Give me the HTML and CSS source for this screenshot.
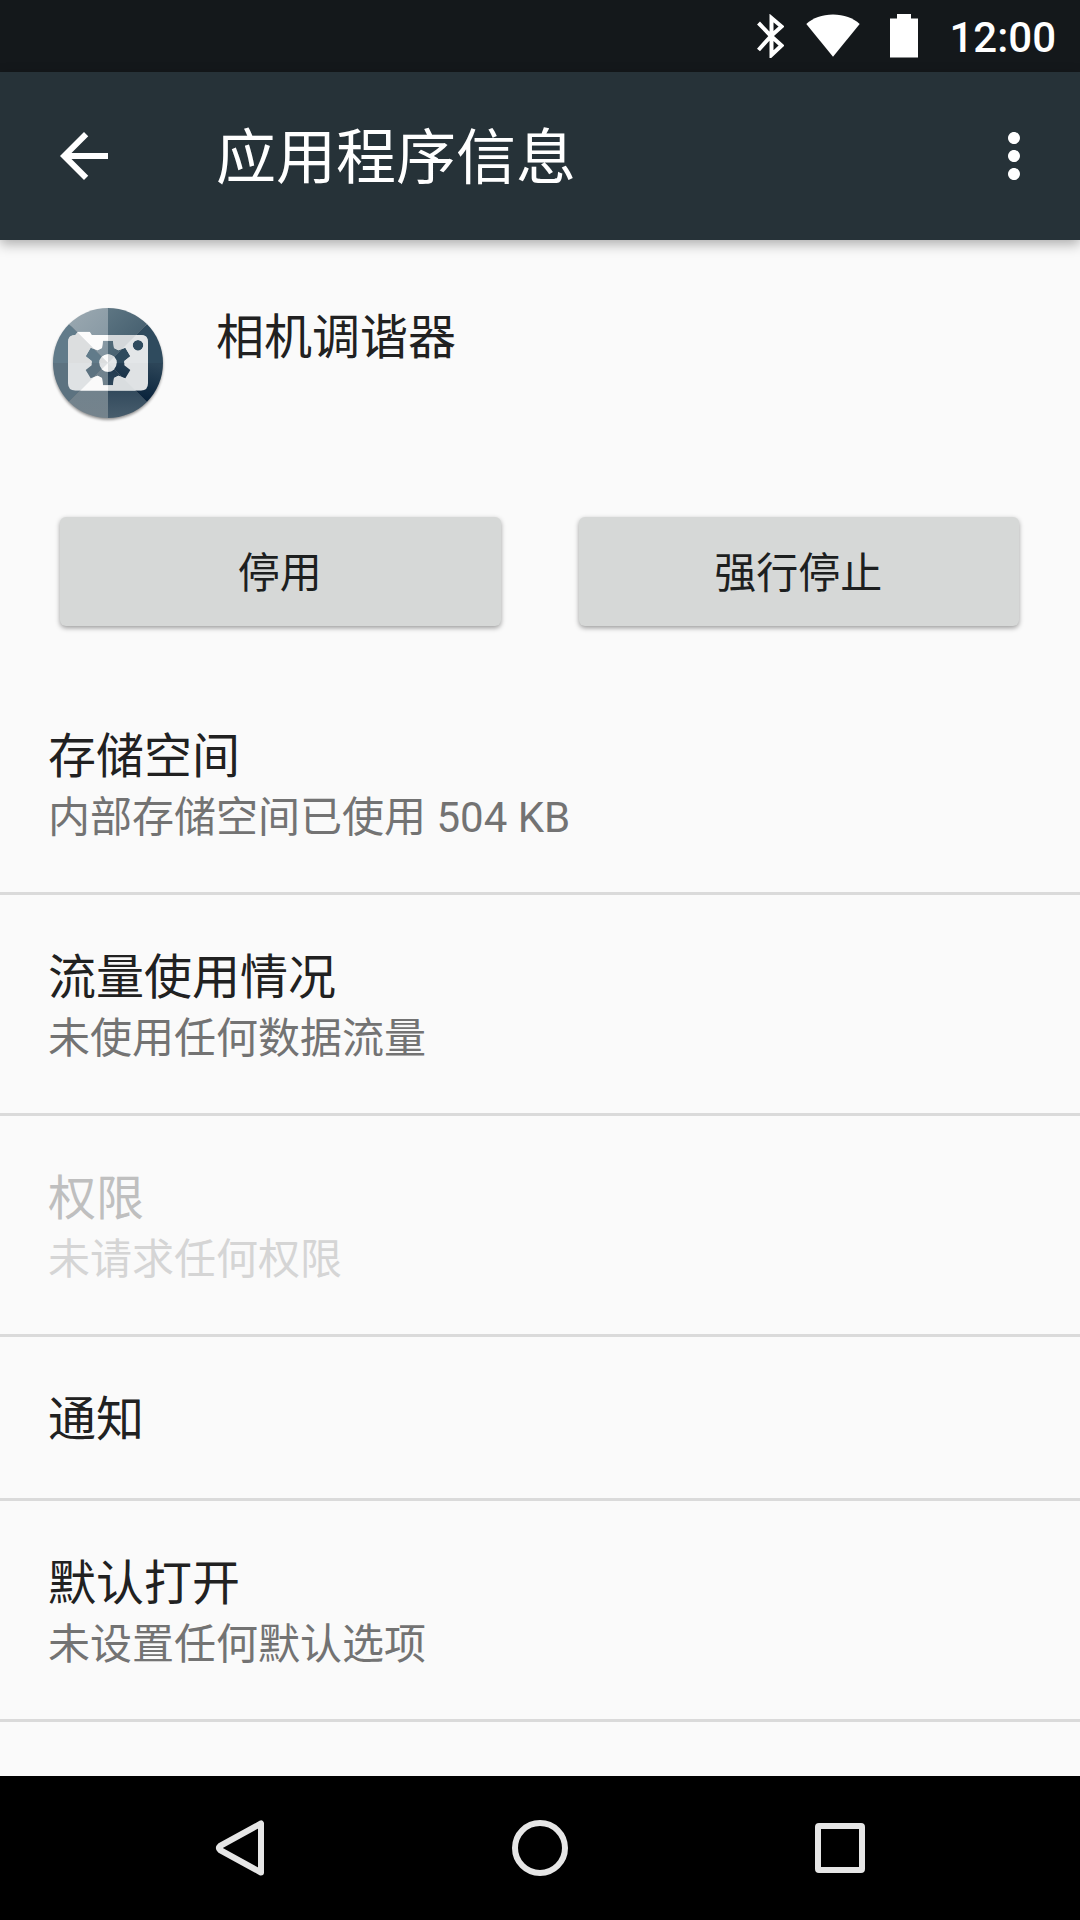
FILE: index.html
```html
<!DOCTYPE html>
<html lang="zh-CN">
<head>
<meta charset="utf-8">
<title>应用程序信息</title>
<link rel="stylesheet" href="styles.css">
</head>
<body>
<div class="screen">
  <div class="status-bar">
    <svg class="bluetooth" width="27" height="44" viewBox="0 0 27 44"><path d="M1.500 9L14 22L1.500 36M14 22L24.500 12.500L14.500 4V41L24.500 31.500L14 22" fill="none" stroke="#fff" stroke-width="4"/></svg>
    <svg class="wifi" width="54" height="44" viewBox="0 0 54 44"><path d="M0.300 10C7 4 16 0.500 27 0.500S47 4 53.700 10L27 42.800Z" fill="#fff"/></svg>
    <svg class="battery" width="28" height="44" viewBox="0 0 28 44"><path d="M7 0H21V4.500H28V43.500H0V4.500H7Z" fill="#fff"/></svg>
    <span class="clock">12:00</span>
  </div>
  <header class="toolbar">
    <svg width="72" height="72" viewBox="0 0 24 24"><path d="M20 11H7.830l5.590-5.590L12 4l-8 8 8 8 1.410-1.410L7.830 13H20v-2z" fill="#fff"/></svg>
    <h1 class="title">应用程序信息</h1>
    <svg width="72" height="72" viewBox="0 0 24 24"><path d="M12 8c1.100 0 2-.9 2-2s-.9-2-2-2-2 .9-2 2 .9 2 2 2zm0 2c-1.100 0-2 .9-2 2s.9 2 2 2 2-.9 2-2-.9-2-2-2zm0 6c-1.100 0-2 .9-2 2s.9 2 2 2 2-.9 2-2-.9-2-2-2z" fill="#fff"/></svg>
  </header>
  <main class="content">
    <section class="app">
      <svg class="app-icon" width="140" height="140" viewBox="0 0 420 420">
        <defs>
          <clipPath id="disc"><circle cx="204" cy="219" r="165"/></clipPath>
          <filter id="shadow" x="-20%" y="-20%" width="140%" height="140%"><feGaussianBlur stdDeviation="5"/></filter>
          <linearGradient id="n1" x1="0" y1="0" x2="1" y2="1"><stop offset="0" stop-color="#a3afb6"/><stop offset="1" stop-color="#80939f"/></linearGradient>
          <linearGradient id="n2" x1="0" y1="0" x2="1" y2="1"><stop offset="0" stop-color="#5f7784"/><stop offset="1" stop-color="#344f61"/></linearGradient>
          <linearGradient id="e2" x1="0.700" y1="0" x2="0.500" y2="0.750"><stop offset="0" stop-color="#2c4558"/><stop offset="1" stop-color="#001a34"/></linearGradient>
          <linearGradient id="s1" x1="0" y1="0" x2="0" y2="1"><stop offset="0" stop-color="#6f828e"/><stop offset="1" stop-color="#75838c"/></linearGradient>
          <linearGradient id="s2" x1="0" y1="0" x2="0" y2="1"><stop offset="0" stop-color="#1c364c"/><stop offset="1" stop-color="#4c6170"/></linearGradient>
          <clipPath id="camera"><path clip-rule="evenodd" d="M106 135L114 125H149L155 135H303Q324 135 324 157V280Q324 302 303 302H106Q84 302 84 280V157Q84 135 106 135ZM294 150A16 16 0 1 0 294 182A16 16 0 1 0 294 150ZM189 152H219L222 174L235 181L256 173L271 199L253 213V226L271 240L256 265L235 257L222 264L219 286H189L186 264L173 257L152 265L137 240L155 226V213L137 199L152 173L173 181L186 174ZM204 193A26 26 0 1 0 204 245A26 26 0 1 0 204 193Z"/></clipPath>
        </defs>
        <circle cx="204" cy="225" r="164" fill="#000" opacity=".45" filter="url(#shadow)"/>
        <g clip-path="url(#disc)">
          <path d="M204 219V39H24Z" fill="url(#n1)"/>
          <path d="M204 219L24 39V219Z" fill="#617b8a"/>
          <path d="M204 219H24V399Z" fill="#5c7280"/>
          <path d="M204 219L24 399H204Z" fill="url(#s1)"/>
          <path d="M204 219V399H384Z" fill="url(#s2)"/>
          <path d="M204 219L384 399V219Z" fill="url(#e2)"/>
          <path d="M204 219H384V39Z" fill="#2f4b5e"/>
          <path d="M204 219L384 39H204Z" fill="url(#n2)"/>
        </g>
        <g clip-path="url(#camera)">
          <rect x="80" y="120" width="250" height="190" fill="#dfe2e4"/>
          <path d="M204 219V109H94Z" fill="#fcfcfc"/>
          <path d="M204 219L84 99V219Z" fill="#dcdedf"/>
          <path d="M204 219L104 319H204Z" fill="#fafafa"/>
          <path d="M204 219V319H304Z" fill="#d9dddf"/>
          <path d="M204 219H334V89Z" fill="#e3e6e8"/>
          <path d="M204 219L314 109H204Z" fill="#d3d7da"/>
        </g>
      </svg>
      <h2 class="app-name">相机调谐器</h2>
    </section>
    <div class="actions">
      <button class="button">停用</button>
      <button class="button">强行停止</button>
    </div>
    <ul class="list">
      <li class="row"><span class="primary">存储空间</span><span class="secondary">内部存储空间已使用 504 KB</span></li>
      <li class="row"><span class="primary">流量使用情况</span><span class="secondary">未使用任何数据流量</span></li>
      <li class="row disabled"><span class="primary">权限</span><span class="secondary">未请求任何权限</span></li>
      <li class="row single"><span class="primary">通知</span></li>
      <li class="row"><span class="primary">默认打开</span><span class="secondary">未设置任何默认选项</span></li>
    </ul>
  </main>
  <nav class="nav-bar">
    <svg width="60" height="60" viewBox="0 0 60 60"><path d="M51 5.500V54.500L10 32Q7.700 30 10 28Z"/></svg>
    <svg width="60" height="60" viewBox="0 0 60 60"><circle cx="30" cy="30" r="25"/></svg>
    <svg width="60" height="60" viewBox="0 0 60 60"><rect x="8" y="8" width="44" height="44" rx="1"/></svg>
  </nav>
</div>
</body>
</html>
```
FILE: styles.css
```css
* { box-sizing: border-box; margin: 0; padding: 0; }

body {
  background: #fafafa;
  font-family: Roboto, "Noto Sans CJK SC", sans-serif;
}

svg { display: block; flex: none; }

.screen {
  display: flex;
  flex-direction: column;
  width: 1080px;
  height: 1920px;
  overflow: hidden;
}

.status-bar {
  display: flex;
  justify-content: flex-end;
  flex: none;
  height: 72px;
  padding: 14px 24px 0 0;
  background: #14181b;
}

.wifi { margin-left: 22px; }
.battery { margin: 0 31px 0 30px; }

.clock {
  height: 44px;
  color: #fff;
  font-size: 42px;
  font-weight: 500;
  line-height: 48px;
}

.toolbar {
  display: flex;
  align-items: center;
  flex: none;
  height: 168px;
  padding: 0 30px 0 48px;
  background: #263238;
  box-shadow: 0 4px 12px rgba(0, 0, 0, .32);
  z-index: 1;
}

.title {
  flex: 1;
  margin-left: 96px;
  padding-top: 6px;
  color: #fff;
  font-size: 60px;
  font-weight: 400;
  line-height: 80px;
}

.content { flex: 1; }

.app {
  display: flex;
  height: 277px;
  padding: 50px 0 0 40px;
}

.app-name {
  margin-left: 36px;
  padding-top: 20px;
  color: #212121;
  font-size: 48px;
  font-weight: 400;
  line-height: 56px;
}

.actions {
  display: flex;
  gap: 78px;
  padding: 0 61px 0 60px;
}

.button {
  flex: 1;
  height: 109px;
  padding: 5px 1px 0 0;
  border: 0;
  border-radius: 6px;
  background: #d6d8d7;
  box-shadow: 0 2px 5px rgba(0, 0, 0, .38);
  color: #1d1f1f;
  font: 400 42px/56px Roboto, "Noto Sans CJK SC", sans-serif;
}

.list { margin-top: 48px; list-style: none; }

.row {
  display: flex;
  flex-direction: column;
  height: 221px;
  padding: 55px 48px 0;
  border-bottom: 3px solid #dadada;
}

.single { height: 164px; }

.primary {
  color: #212121;
  font-size: 48px;
  line-height: 56px;
}

.secondary {
  margin-top: 8px;
  color: #737373;
  font-size: 42px;
  line-height: 50px;
}

.disabled .primary { color: #bfbfbf; }
.disabled .secondary { color: #d5d5d5; }

.nav-bar {
  display: flex;
  justify-content: center;
  align-items: center;
  flex: none;
  gap: 240px;
  height: 144px;
  background: #000;
  fill: none;
  stroke: #e6e6e6;
  stroke-width: 6;
  stroke-linejoin: round;
}
```
